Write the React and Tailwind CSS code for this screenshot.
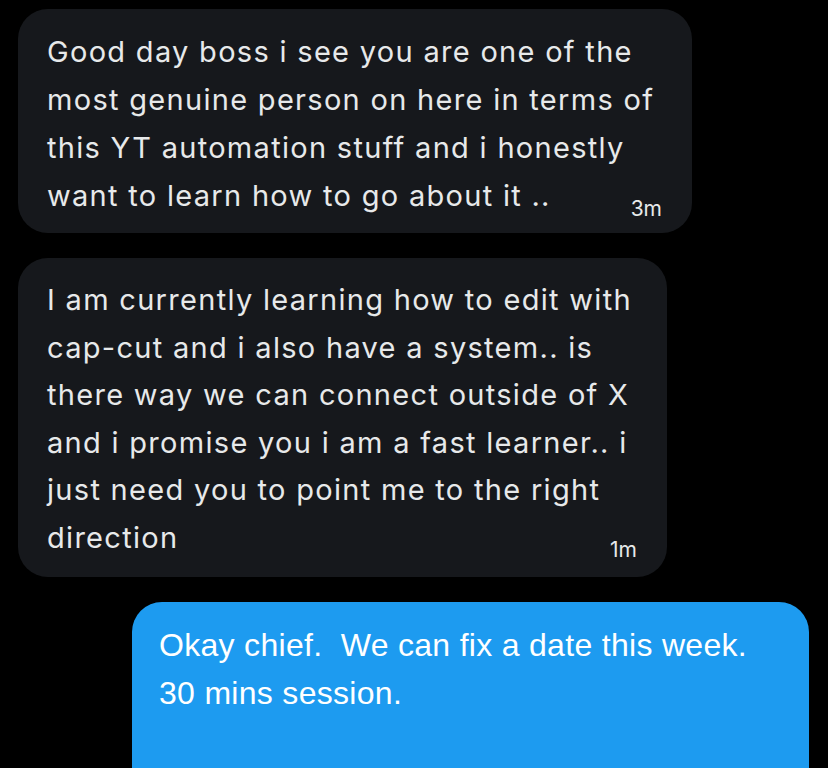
const Bubble = ({ lines, time, className }) => (
    <div className={`rounded-[30px] bg-[#16181c] text-[#e7e9ea] ${className}`}>
        {lines.map((line, i) =>
            i === lines.length - 1 ? (
                <div key={i} className="flex items-end justify-between">
                    <span>{line}</span>
                    <span className="text-[21px] leading-[30px] mb-[-4px] tracking-normal">{time}</span>
                </div>
            ) : (
                <div key={i}>{line}</div>
            )
        )}
    </div>
);

export default function App() {
    return (
        <div className="h-[768px] w-[828px] overflow-hidden bg-black pt-[9px] font-['Inter',sans-serif] text-[29px] tracking-[1.3px]">
            <Bubble
                className="ml-[18px] w-[674px] h-[224px] pl-[29px] pr-[30px] pt-[19px] leading-[48px]"
                time="3m"
                lines={[
                    "Good day boss i see you are one of the",
                    "most genuine person on here in terms of",
                    "this YT automation stuff and i honestly",
                    "want to learn how to go about it ..",
                ]}
            />
            <Bubble
                className="ml-[18px] mt-[25px] w-[649px] h-[319px] pl-[29px] pr-[30px] pt-[18px] leading-[47.5px]"
                time="1m"
                lines={[
                    "I am currently learning how to edit with",
                    "cap-cut and i also have a system.. is",
                    "there way we can connect outside of X",
                    "and i promise you i am a fast learner.. i",
                    "just need you to point me to the right",
                    "direction",
                ]}
            />
            <div className="ml-[132px] mt-[25px] w-[677px] h-[200px] rounded-[30px] bg-[#1d9bf0] pl-[27px] pt-[19px] text-white font-['Liberation_Sans',sans-serif] text-[32px] tracking-[0.3px] leading-[48px] whitespace-pre">
                <div>{"Okay chief.  We can fix a date this week."}</div>
                <div>30 mins session.</div>
            </div>
        </div>
    );
}
